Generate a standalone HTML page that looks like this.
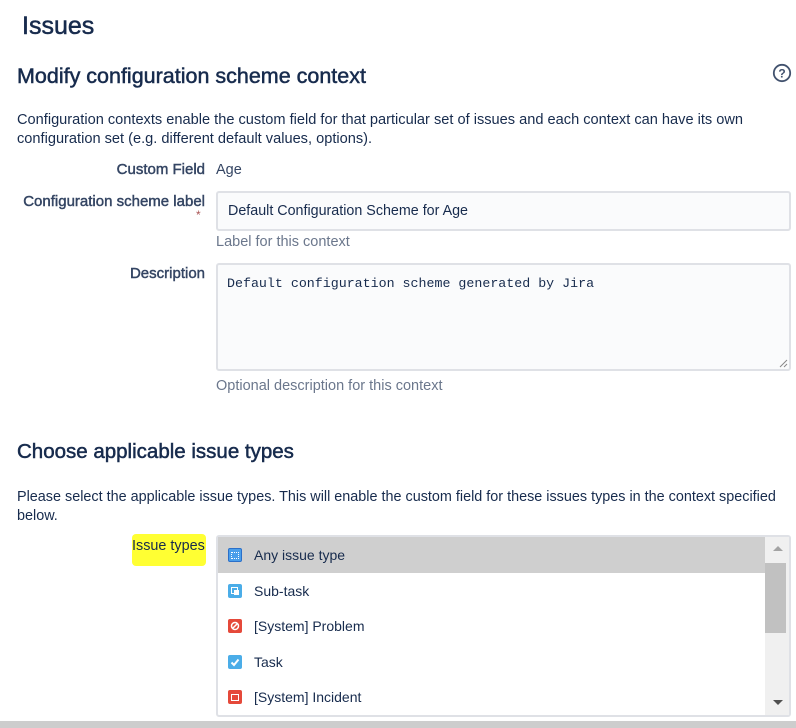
<!DOCTYPE html>
<html><head><meta charset="utf-8"><style>
body{margin:0;width:796px;height:728px;background:#fff;font-family:"Liberation Sans",sans-serif;color:#172b4d;position:relative;overflow:hidden}
.a{position:absolute;white-space:nowrap}
.h{-webkit-text-stroke:0.5px #172b4d}
.lab{position:absolute;right:591px;font-size:15px;color:#344563;-webkit-text-stroke:0.45px #344563}
.hint{color:#6b778c;font-size:14.5px}
.box{position:absolute;border:2px solid #dfe1e6;border-radius:3px;background:#fafbfc;box-sizing:border-box}
.row{position:absolute;left:0;width:548px;height:36px;font-size:14px;color:#172b4d}
.row span.t{position:absolute;left:36px;top:10px}
.ic{position:absolute;left:10px;top:11px;width:14px;height:14px;border-radius:2px}
</style></head><body>
<div class="a h" style="left:22px;top:12px;font-size:25px">Issues</div>
<div class="a h" style="left:17px;top:64px;font-size:21.5px">Modify configuration scheme context</div>
<svg class="a" style="left:772px;top:63px" width="20" height="20" viewBox="0 0 20 20"><circle cx="10" cy="10" r="8.2" fill="none" stroke="#42526e" stroke-width="1.8"/><text x="10" y="14.5" font-size="12" font-weight="bold" text-anchor="middle" fill="#42526e" font-family="Liberation Sans">?</text></svg>
<div class="a" style="left:17px;top:111px;font-size:14.6px;line-height:19px;color:#172b4d">Configuration contexts enable the custom field for that particular set of issues and each context can have its own<br>configuration set (e.g. different default values, options).</div>
<div class="lab" style="top:161px">Custom Field</div>
<div class="a" style="left:216px;top:162px;font-size:14.5px;color:#344563">Age</div>
<div class="lab" style="top:193px">Configuration scheme label</div>
<div class="a" style="left:196px;top:208px;color:#a55;font-size:12px">*</div>
<div class="box" style="left:216px;top:191px;width:575px;height:40px"><span class="a" style="left:10px;top:10px;font-size:14.3px;color:#172b4d">Default Configuration Scheme for Age</span></div>
<div class="a hint" style="left:216px;top:234px">Label for this context</div>
<div class="lab" style="top:265px">Description</div>
<div class="box" style="left:216px;top:263px;width:575px;height:108px"><span class="a" style="left:9px;top:11px;font-size:13.3px;font-family:'Liberation Mono',monospace;color:#172b4d">Default configuration scheme generated by Jira</span>
<svg class="a" style="right:1px;bottom:1px" width="10" height="10"><path d="M9 2L2 9M9 6L6 9" stroke="#888" stroke-width="1"/></svg></div>
<div class="a hint" style="left:216px;top:378px">Optional description for this context</div>
<div class="a h" style="left:17px;top:440px;font-size:20.5px">Choose applicable issue types</div>
<div class="a" style="left:17px;top:488px;font-size:14.4px;line-height:19px">Please select the applicable issue types. This will enable the custom field for these issues types in the context specified<br>below.</div>
<div class="a" style="left:132px;top:534px;width:74px;height:32px;background:#ffff33;border-radius:4px"></div>
<div class="a" style="left:132px;top:538px;font-size:14.4px;color:#172b4d">Issue types</div>
<div class="a" style="left:216px;top:535px;width:575px;height:182px;border:2px solid #dfe1e6;border-radius:3px;box-sizing:border-box;background:#fff">
<div class="row" style="top:0;background:#cfcfcf"><div class="ic" style="background:#4a9eea;border:1px solid #2a6fc9;box-sizing:border-box"><div style="margin:3px 2px;height:5px;border:1px dotted #fff"></div></div><span class="t">Any issue type</span></div>
<div class="row" style="top:36px"><div class="ic" style="background:#4bade8"><div style="position:absolute;left:3px;top:3px;width:5px;height:5px;border:1px solid #fff"></div><div style="position:absolute;left:6px;top:6px;width:5px;height:5px;background:#fff"></div></div><span class="t">Sub-task</span></div>
<div class="row" style="top:71px"><div class="ic" style="background:#e5493a"><svg width="14" height="14"><circle cx="7" cy="7" r="3.5" stroke="#fff" stroke-width="1.5" fill="none"/><path d="M4.5 9.5L9.5 4.5" stroke="#fff" stroke-width="1.5"/></svg></div><span class="t">[System] Problem</span></div>
<div class="row" style="top:107px"><div class="ic" style="background:#4bade8"><svg width="14" height="14"><path d="M3.5 7.5L6 10L10.5 4.5" stroke="#fff" stroke-width="2" fill="none"/></svg></div><span class="t">Task</span></div>
<div class="row" style="top:142px"><div class="ic" style="background:#e5493a"><div style="position:absolute;left:3px;top:4px;width:6px;height:5px;border:1px solid #fff"></div></div><span class="t">[System] Incident</span></div>
<div class="a" style="right:0;top:0;width:24px;height:178px;background:#f0f0f0"></div>
<div class="a" style="right:3px;top:26px;width:21px;height:70px;background:#c1c1c1"></div>
<svg class="a" style="right:5px;top:8px" width="12" height="8"><path d="M1 6L6 1L11 6Z" fill="#a3a3a3"/></svg>
<svg class="a" style="right:5px;top:162px" width="12" height="8"><path d="M1 1L6 6L11 1Z" fill="#505050"/></svg>
</div>
<div class="a" style="left:0;top:721px;width:796px;height:7px;background:#cdcdcd"></div>
</body></html>
